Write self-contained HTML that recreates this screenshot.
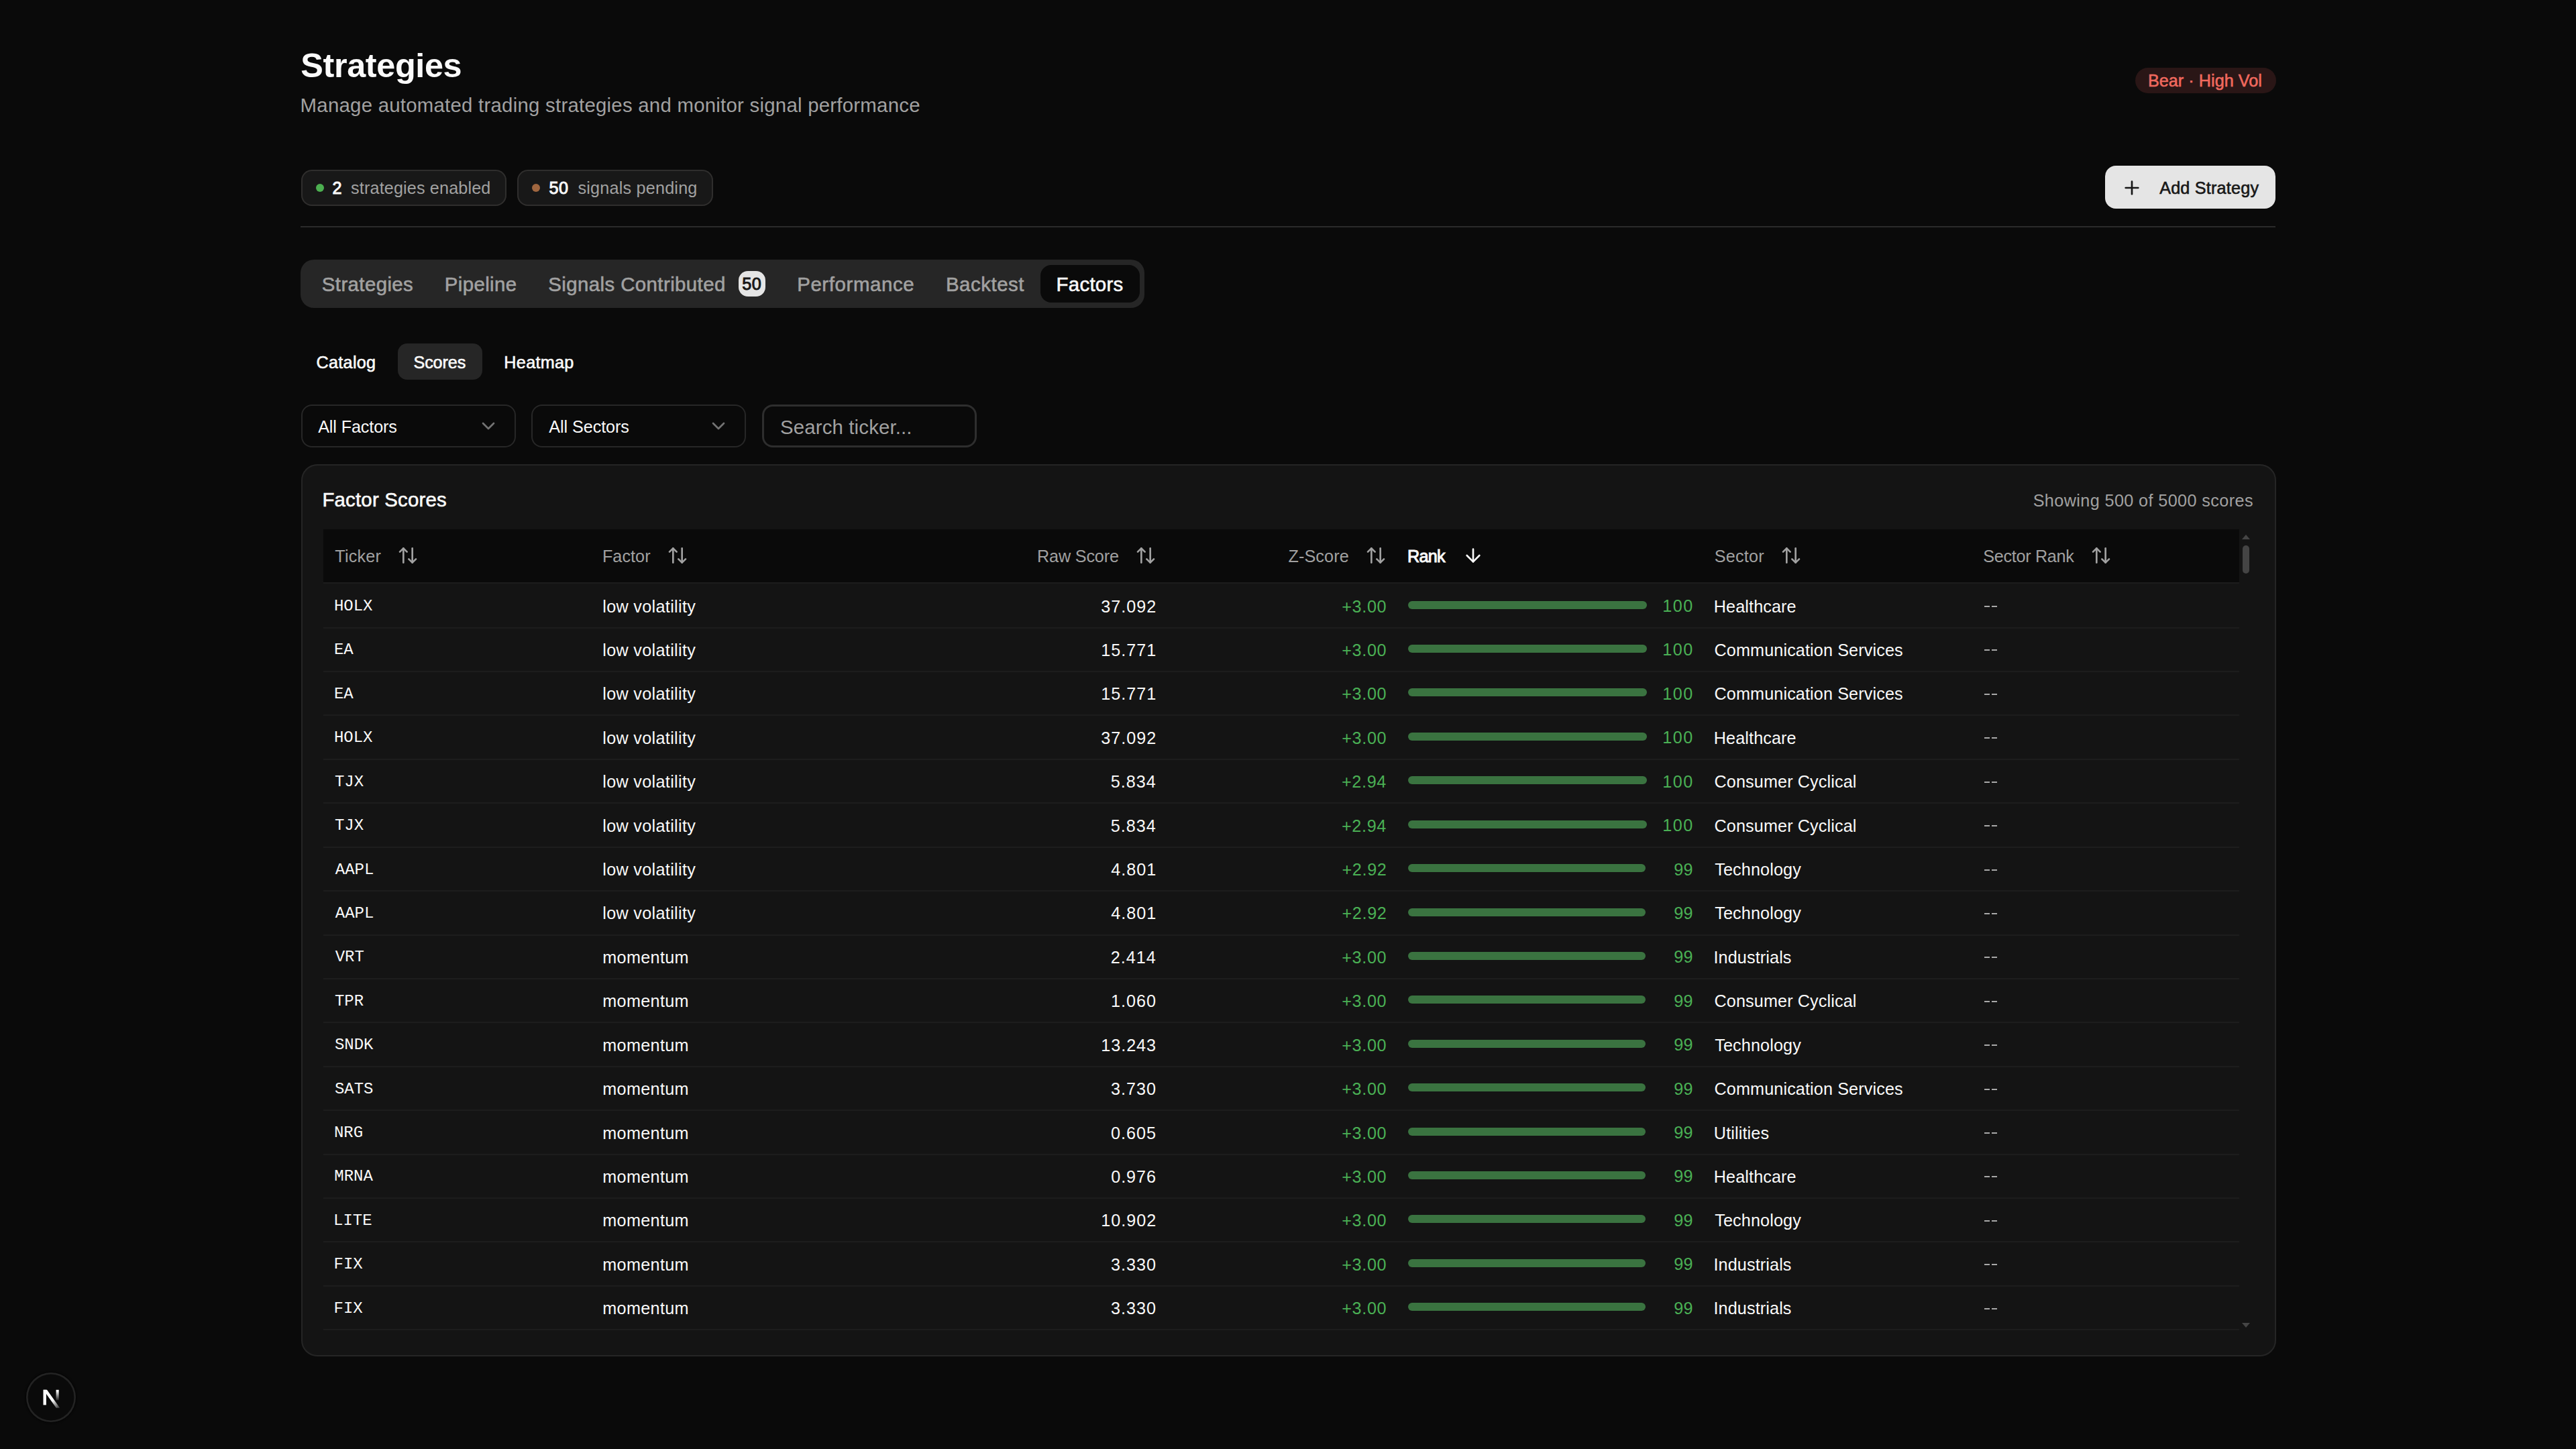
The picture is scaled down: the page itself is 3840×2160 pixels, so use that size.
<!DOCTYPE html>
<html><head><meta charset="utf-8"><title>Strategies</title><style>
*{margin:0;padding:0;box-sizing:border-box}
html,body{width:1920px;height:1080px;overflow:hidden;background:#0a0a0a}
@media (min-width:2400px){html{zoom:2}}
body{position:relative;font-family:"Liberation Sans",sans-serif;-webkit-font-smoothing:antialiased}
.t{position:absolute;white-space:nowrap}
.b{position:absolute}
</style></head>
<body>
<div class="t" style="top:35px;font-size:25.2px;line-height:28.153px;color:#fafafa;font-weight:bold;font-family:'Liberation Sans',sans-serif;letter-spacing:-0.19px;left:224.17px;">Strategies</div>
<div class="t" style="top:70px;font-size:14.7px;line-height:16.423px;color:#a1a1a1;font-weight:normal;font-family:'Liberation Sans',sans-serif;transform:translateY(0.50px);letter-spacing:0.12px;left:223.79px;">Manage automated trading strategies and monitor signal performance</div>
<div class="b" style="left:1591px;top:50px;width:105px;height:19px;background:#2a1616;border-radius:10px;transform:translate(0.5px,0.5px);"></div>
<div class="t" style="top:53px;font-size:12.6px;line-height:14.077px;color:#f0695e;font-weight:normal;font-family:'Liberation Sans',sans-serif;letter-spacing:0.02px;left:1600.97px;-webkit-text-stroke:0.3px currentColor;">Bear · High Vol</div>
<div class="b" style="left:224px;top:126px;width:153px;height:27px;background:#181818;border-radius:8px;transform:translate(0.5px,0.5px);box-shadow:inset 0 0 0 1px #2f2e2d;"></div>
<div class="b" style="left:235px;top:137px;width:6px;height:6px;background:#4caf50;border-radius:3px;transform:translate(0.5px,0.0px);"></div>
<div class="t" style="top:133px;font-size:12.6px;line-height:14.077px;color:#fafafa;font-weight:normal;font-family:'Liberation Sans',sans-serif;left:247.77px;-webkit-text-stroke:0.5px currentColor;">2</div>
<div class="t" style="top:133px;font-size:12.6px;line-height:14.077px;color:#a1a1a1;font-weight:normal;font-family:'Liberation Sans',sans-serif;letter-spacing:0.07px;left:261.55px;">strategies enabled</div>
<div class="b" style="left:385px;top:126px;width:146px;height:27px;background:#181818;border-radius:8px;transform:translate(0.5px,0.5px);box-shadow:inset 0 0 0 1px #2f2e2d;"></div>
<div class="b" style="left:396px;top:137px;width:6px;height:6px;background:#a0663f;border-radius:3px;transform:translate(0.5px,0.0px);"></div>
<div class="t" style="top:133px;font-size:12.6px;line-height:14.077px;color:#fafafa;font-weight:normal;font-family:'Liberation Sans',sans-serif;letter-spacing:0.3px;left:409.20px;-webkit-text-stroke:0.5px currentColor;">50</div>
<div class="t" style="top:133px;font-size:12.6px;line-height:14.077px;color:#a1a1a1;font-weight:normal;font-family:'Liberation Sans',sans-serif;letter-spacing:0.1px;left:430.75px;">signals pending</div>
<div class="b" style="left:1569px;top:123px;width:127px;height:32px;background:#e5e5e5;border-radius:8px;transform:translate(0.0px,0.5px);"></div>
<svg class="b" style="left:1581px;top:132px" width="16" height="16" viewBox="0 0 24 24" fill="none" stroke="#171717" stroke-width="2" stroke-linecap="round" stroke-linejoin="round"><path d="M5 12h14"/><path d="M12 5v14"/></svg>
<div class="t" style="top:133px;font-size:12.6px;line-height:14.077px;color:#171717;font-weight:normal;font-family:'Liberation Sans',sans-serif;letter-spacing:0.1px;left:1609.58px;-webkit-text-stroke:0.3px currentColor;">Add Strategy</div>
<div class="b" style="left:224px;top:168px;width:1472px;height:1px;background:#2a2a2a;border-radius:0px;transform:translate(0.0px,0.5px);"></div>
<div class="b" style="left:224px;top:193px;width:629px;height:36px;background:#262626;border-radius:10px;transform:translate(0.0px,0.5px);"></div>
<div class="b" style="left:775px;top:197px;width:74px;height:28px;background:#0a0a0a;border-radius:8px;transform:translate(0.5px,0.5px);"></div>
<div class="t" style="top:204px;font-size:14.7px;line-height:16.423px;color:#a1a1a1;font-weight:normal;font-family:'Liberation Sans',sans-serif;letter-spacing:0.2px;left:239.93px;-webkit-text-stroke:0.3px currentColor;">Strategies</div>
<div class="t" style="top:204px;font-size:14.7px;line-height:16.423px;color:#a1a1a1;font-weight:normal;font-family:'Liberation Sans',sans-serif;letter-spacing:0.2px;left:331.39px;-webkit-text-stroke:0.3px currentColor;">Pipeline</div>
<div class="t" style="top:204px;font-size:14.7px;line-height:16.423px;color:#a1a1a1;font-weight:normal;font-family:'Liberation Sans',sans-serif;letter-spacing:0.21px;left:408.63px;-webkit-text-stroke:0.3px currentColor;">Signals Contributed</div>
<div class="t" style="top:204px;font-size:14.7px;line-height:16.423px;color:#a1a1a1;font-weight:normal;font-family:'Liberation Sans',sans-serif;letter-spacing:0.31px;left:594.09px;-webkit-text-stroke:0.3px currentColor;">Performance</div>
<div class="t" style="top:204px;font-size:14.7px;line-height:16.423px;color:#a1a1a1;font-weight:normal;font-family:'Liberation Sans',sans-serif;letter-spacing:0.27px;left:704.99px;-webkit-text-stroke:0.3px currentColor;">Backtest</div>
<div class="t" style="top:204px;font-size:14.7px;line-height:16.423px;color:#fafafa;font-weight:normal;font-family:'Liberation Sans',sans-serif;letter-spacing:0.14px;left:787.29px;-webkit-text-stroke:0.3px currentColor;">Factors</div>
<div class="b" style="left:550px;top:202px;width:20px;height:19px;background:#e5e5e5;border-radius:7px;transform:translate(0.5px,0.0px);"></div>
<div class="t" style="top:204px;font-size:12.6px;line-height:14.077px;color:#171717;font-weight:normal;font-family:'Liberation Sans',sans-serif;transform:translateY(0.50px);letter-spacing:0.3px;left:553.10px;-webkit-text-stroke:0.5px currentColor;">50</div>
<div class="b" style="left:296px;top:256px;width:63px;height:27px;background:#262626;border-radius:7px;transform:translate(0.5px,0.0px);"></div>
<div class="t" style="top:263px;font-size:12.6px;line-height:14.077px;color:#fafafa;font-weight:normal;font-family:'Liberation Sans',sans-serif;letter-spacing:0.15px;left:235.76px;-webkit-text-stroke:0.3px currentColor;">Catalog</div>
<div class="t" style="top:263px;font-size:12.6px;line-height:14.077px;color:#fafafa;font-weight:normal;font-family:'Liberation Sans',sans-serif;letter-spacing:-0.06px;left:308.23px;-webkit-text-stroke:0.3px currentColor;">Scores</div>
<div class="t" style="top:263px;font-size:12.6px;line-height:14.077px;color:#fafafa;font-weight:normal;font-family:'Liberation Sans',sans-serif;letter-spacing:0.15px;left:375.67px;-webkit-text-stroke:0.3px currentColor;">Heatmap</div>
<div class="b" style="left:224px;top:301px;width:160px;height:32px;background:#0a0a0a;border-radius:8px;transform:translate(0.5px,0.5px);box-shadow:inset 0 0 0 1px #272727;"></div>
<div class="t" style="top:311px;font-size:12.6px;line-height:14.077px;color:#fafafa;font-weight:normal;font-family:'Liberation Sans',sans-serif;letter-spacing:-0.06px;left:237.08px;">All Factors</div>
<svg class="b" style="left:355.9px;top:309.4px" width="16" height="16" viewBox="0 0 24 24" fill="none" stroke="#737373" stroke-width="2" stroke-linecap="round" stroke-linejoin="round"><path d="m6 9 6 6 6-6"/></svg>
<div class="b" style="left:396px;top:301px;width:160px;height:32px;background:#0a0a0a;border-radius:8px;transform:translate(0.0px,0.5px);box-shadow:inset 0 0 0 1px #272727;"></div>
<div class="t" style="top:311px;font-size:12.6px;line-height:14.077px;color:#fafafa;font-weight:normal;font-family:'Liberation Sans',sans-serif;letter-spacing:-0.04px;left:409.18px;">All Sectors</div>
<svg class="b" style="left:527.4px;top:309.4px" width="16" height="16" viewBox="0 0 24 24" fill="none" stroke="#737373" stroke-width="2" stroke-linecap="round" stroke-linejoin="round"><path d="m6 9 6 6 6-6"/></svg>
<div class="b" style="left:568px;top:301px;width:160px;height:32px;background:#0a0a0a;border-radius:8px;transform:translate(0.0px,0.5px);box-shadow:inset 0 0 0 1.5px #2e2e2e;"></div>
<div class="t" style="top:310px;font-size:14.7px;line-height:16.423px;color:#a1a1a1;font-weight:normal;font-family:'Liberation Sans',sans-serif;transform:translateY(0.50px);letter-spacing:0.07px;left:581.53px;">Search ticker...</div>
<div class="b" style="left:224px;top:346px;width:1472px;height:665px;background:#141414;border-radius:12px;transform:translate(0.5px,0.0px);box-shadow:inset 0 0 0 1px #252525;"></div>
<div class="t" style="top:364px;font-size:14.7px;line-height:16.423px;color:#fafafa;font-weight:normal;font-family:'Liberation Sans',sans-serif;transform:translateY(0.50px);letter-spacing:0.1px;left:240.19px;-webkit-text-stroke:0.3px currentColor;">Factor Scores</div>
<div class="t" style="top:366px;font-size:12.6px;line-height:14.077px;color:#a1a1a1;font-weight:normal;font-family:'Liberation Sans',sans-serif;letter-spacing:0.2px;right:240.54px;">Showing 500 of 5000 scores</div>
<div class="b" style="left:241px;top:394px;width:1428px;height:40px;background:#0a0a0a;border-radius:0px;transform:translate(0.0px,0.5px);"></div>
<div class="b" style="left:241px;top:434px;width:1428px;height:1px;background:#1d1d1d;border-radius:0px;"></div>
<div class="t" style="top:407px;font-size:12.6px;line-height:14.077px;color:#a1a1a1;font-weight:normal;font-family:'Liberation Sans',sans-serif;transform:translateY(0.50px);letter-spacing:0.1px;left:249.62px;">Ticker</div>
<svg class="b" style="left:296.2px;top:406.1px" width="16" height="16" viewBox="0 0 24 24" fill="none" stroke="#a1a1a1" stroke-width="2" stroke-linecap="round" stroke-linejoin="round"><path d="m21 16-4 4-4-4"/><path d="M17 20V4"/><path d="m3 8 4-4 4 4"/><path d="M7 4v16"/></svg>
<div class="t" style="top:407px;font-size:12.6px;line-height:14.077px;color:#a1a1a1;font-weight:normal;font-family:'Liberation Sans',sans-serif;transform:translateY(0.50px);letter-spacing:0.02px;left:448.97px;">Factor</div>
<svg class="b" style="left:497.2px;top:406.1px" width="16" height="16" viewBox="0 0 24 24" fill="none" stroke="#a1a1a1" stroke-width="2" stroke-linecap="round" stroke-linejoin="round"><path d="m21 16-4 4-4-4"/><path d="M17 20V4"/><path d="m3 8 4-4 4 4"/><path d="M7 4v16"/></svg>
<div class="t" style="top:407px;font-size:12.6px;line-height:14.077px;color:#a1a1a1;font-weight:normal;font-family:'Liberation Sans',sans-serif;transform:translateY(0.50px);letter-spacing:-0.08px;right:1086.12px;">Raw Score</div>
<svg class="b" style="left:846.2px;top:406.1px" width="16" height="16" viewBox="0 0 24 24" fill="none" stroke="#a1a1a1" stroke-width="2" stroke-linecap="round" stroke-linejoin="round"><path d="m21 16-4 4-4-4"/><path d="M17 20V4"/><path d="m3 8 4-4 4 4"/><path d="M7 4v16"/></svg>
<div class="t" style="top:407px;font-size:12.6px;line-height:14.077px;color:#a1a1a1;font-weight:normal;font-family:'Liberation Sans',sans-serif;transform:translateY(0.50px);letter-spacing:0.06px;right:914.58px;">Z-Score</div>
<svg class="b" style="left:1017.3px;top:406.1px" width="16" height="16" viewBox="0 0 24 24" fill="none" stroke="#a1a1a1" stroke-width="2" stroke-linecap="round" stroke-linejoin="round"><path d="m21 16-4 4-4-4"/><path d="M17 20V4"/><path d="m3 8 4-4 4 4"/><path d="M7 4v16"/></svg>
<div class="t" style="top:407px;font-size:12.6px;line-height:14.077px;color:#fafafa;font-weight:normal;font-family:'Liberation Sans',sans-serif;transform:translateY(0.50px);letter-spacing:-0.35px;left:1048.97px;-webkit-text-stroke:0.5px currentColor;">Rank</div>
<svg class="b" style="left:1090px;top:406.1px" width="16" height="16" viewBox="0 0 24 24" fill="none" stroke="#fafafa" stroke-width="2" stroke-linecap="round" stroke-linejoin="round"><path d="M12 5v14"/><path d="m19 12-7 7-7-7"/></svg>
<div class="t" style="top:407px;font-size:12.6px;line-height:14.077px;color:#a1a1a1;font-weight:normal;font-family:'Liberation Sans',sans-serif;transform:translateY(0.50px);letter-spacing:0.13px;left:1277.83px;">Sector</div>
<svg class="b" style="left:1327.1px;top:406.1px" width="16" height="16" viewBox="0 0 24 24" fill="none" stroke="#a1a1a1" stroke-width="2" stroke-linecap="round" stroke-linejoin="round"><path d="m21 16-4 4-4-4"/><path d="M17 20V4"/><path d="m3 8 4-4 4 4"/><path d="M7 4v16"/></svg>
<div class="t" style="top:407px;font-size:12.6px;line-height:14.077px;color:#a1a1a1;font-weight:normal;font-family:'Liberation Sans',sans-serif;transform:translateY(0.50px);letter-spacing:-0.15px;left:1478.13px;">Sector Rank</div>
<svg class="b" style="left:1558.2px;top:406.1px" width="16" height="16" viewBox="0 0 24 24" fill="none" stroke="#a1a1a1" stroke-width="2" stroke-linecap="round" stroke-linejoin="round"><path d="m21 16-4 4-4-4"/><path d="M17 20V4"/><path d="m3 8 4-4 4 4"/><path d="M7 4v16"/></svg>
<div class="b" style="left:241px;top:467px;width:1428px;height:1px;background:#1d1d1d;border-radius:0px;transform:translate(0.0px,0.5px);"></div>
<div class="t" style="top:445px;font-size:12px;line-height:13.594px;color:#fafafa;font-weight:normal;font-family:'Liberation Mono',monospace;left:248.95px;">HOLX</div>
<div class="t" style="top:445px;font-size:12.6px;line-height:14.077px;color:#fafafa;font-weight:normal;font-family:'Liberation Sans',sans-serif;letter-spacing:0.16px;left:449.15px;">low volatility</div>
<div class="t" style="top:445px;font-size:12.6px;line-height:14.077px;color:#fafafa;font-weight:normal;font-family:'Liberation Sans',sans-serif;letter-spacing:0.49px;right:1057.88px;">37.092</div>
<div class="t" style="top:445px;font-size:12.6px;line-height:14.077px;color:#4ab054;font-weight:normal;font-family:'Liberation Sans',sans-serif;letter-spacing:0.33px;right:886.38px;">+3.00</div>
<div class="b" style="left:1049px;top:448px;width:178px;height:6px;background:#3a7340;border-radius:3px;transform:translate(0.5px,0.0px);"></div>
<div class="t" style="top:444px;font-size:12.6px;line-height:14.077px;color:#4ab054;font-weight:normal;font-family:'Liberation Sans',sans-serif;transform:translateY(0.50px);letter-spacing:0.8px;right:657.51px;">100</div>
<div class="t" style="top:445px;font-size:12.6px;line-height:14.077px;color:#fafafa;font-weight:normal;font-family:'Liberation Sans',sans-serif;letter-spacing:0.06px;left:1277.37px;">Healthcare</div>
<div class="b" style="left:1479px;top:451px;width:4px;height:1px;background:#a8a8a8;border-radius:0px;transform:translate(0.0px,0.5px);"></div>
<div class="b" style="left:1484px;top:451px;width:4px;height:1px;background:#a8a8a8;border-radius:0px;transform:translate(0.5px,0.5px);"></div>
<div class="b" style="left:241px;top:500px;width:1428px;height:1px;background:#1d1d1d;border-radius:0px;"></div>
<div class="t" style="top:477px;font-size:12px;line-height:13.594px;color:#fafafa;font-weight:normal;font-family:'Liberation Mono',monospace;transform:translateY(0.50px);left:248.95px;">EA</div>
<div class="t" style="top:477px;font-size:12.6px;line-height:14.077px;color:#fafafa;font-weight:normal;font-family:'Liberation Sans',sans-serif;transform:translateY(0.50px);letter-spacing:0.16px;left:449.15px;">low volatility</div>
<div class="t" style="top:477px;font-size:12.6px;line-height:14.077px;color:#fafafa;font-weight:normal;font-family:'Liberation Sans',sans-serif;transform:translateY(0.50px);letter-spacing:0.49px;right:1057.89px;">15.771</div>
<div class="t" style="top:477px;font-size:12.6px;line-height:14.077px;color:#4ab054;font-weight:normal;font-family:'Liberation Sans',sans-serif;transform:translateY(0.50px);letter-spacing:0.33px;right:886.38px;">+3.00</div>
<div class="b" style="left:1049px;top:480px;width:178px;height:6px;background:#3a7340;border-radius:3px;transform:translate(0.5px,0.5px);"></div>
<div class="t" style="top:477px;font-size:12.6px;line-height:14.077px;color:#4ab054;font-weight:normal;font-family:'Liberation Sans',sans-serif;letter-spacing:0.8px;right:657.51px;">100</div>
<div class="t" style="top:477px;font-size:12.6px;line-height:14.077px;color:#fafafa;font-weight:normal;font-family:'Liberation Sans',sans-serif;transform:translateY(0.50px);letter-spacing:0.06px;left:1277.76px;">Communication Services</div>
<div class="b" style="left:1479px;top:484px;width:4px;height:1px;background:#a8a8a8;border-radius:0px;"></div>
<div class="b" style="left:1484px;top:484px;width:4px;height:1px;background:#a8a8a8;border-radius:0px;transform:translate(0.5px,0.0px);"></div>
<div class="b" style="left:241px;top:532px;width:1428px;height:1px;background:#1d1d1d;border-radius:0px;transform:translate(0.0px,0.5px);"></div>
<div class="t" style="top:510px;font-size:12px;line-height:13.594px;color:#fafafa;font-weight:normal;font-family:'Liberation Mono',monospace;transform:translateY(0.50px);left:248.95px;">EA</div>
<div class="t" style="top:510px;font-size:12.6px;line-height:14.077px;color:#fafafa;font-weight:normal;font-family:'Liberation Sans',sans-serif;letter-spacing:0.16px;left:449.15px;">low volatility</div>
<div class="t" style="top:510px;font-size:12.6px;line-height:14.077px;color:#fafafa;font-weight:normal;font-family:'Liberation Sans',sans-serif;letter-spacing:0.49px;right:1057.89px;">15.771</div>
<div class="t" style="top:510px;font-size:12.6px;line-height:14.077px;color:#4ab054;font-weight:normal;font-family:'Liberation Sans',sans-serif;letter-spacing:0.33px;right:886.38px;">+3.00</div>
<div class="b" style="left:1049px;top:513px;width:178px;height:6px;background:#3a7340;border-radius:3px;transform:translate(0.5px,0.0px);"></div>
<div class="t" style="top:510px;font-size:12.6px;line-height:14.077px;color:#4ab054;font-weight:normal;font-family:'Liberation Sans',sans-serif;letter-spacing:0.8px;right:657.51px;">100</div>
<div class="t" style="top:510px;font-size:12.6px;line-height:14.077px;color:#fafafa;font-weight:normal;font-family:'Liberation Sans',sans-serif;letter-spacing:0.06px;left:1277.76px;">Communication Services</div>
<div class="b" style="left:1479px;top:517px;width:4px;height:1px;background:#a8a8a8;border-radius:0px;"></div>
<div class="b" style="left:1484px;top:517px;width:4px;height:1px;background:#a8a8a8;border-radius:0px;transform:translate(0.5px,0.0px);"></div>
<div class="b" style="left:241px;top:565px;width:1428px;height:1px;background:#1d1d1d;border-radius:0px;transform:translate(0.0px,0.5px);"></div>
<div class="t" style="top:543px;font-size:12px;line-height:13.594px;color:#fafafa;font-weight:normal;font-family:'Liberation Mono',monospace;left:248.95px;">HOLX</div>
<div class="t" style="top:543px;font-size:12.6px;line-height:14.077px;color:#fafafa;font-weight:normal;font-family:'Liberation Sans',sans-serif;letter-spacing:0.16px;left:449.15px;">low volatility</div>
<div class="t" style="top:543px;font-size:12.6px;line-height:14.077px;color:#fafafa;font-weight:normal;font-family:'Liberation Sans',sans-serif;letter-spacing:0.49px;right:1057.88px;">37.092</div>
<div class="t" style="top:543px;font-size:12.6px;line-height:14.077px;color:#4ab054;font-weight:normal;font-family:'Liberation Sans',sans-serif;letter-spacing:0.33px;right:886.38px;">+3.00</div>
<div class="b" style="left:1049px;top:546px;width:178px;height:6px;background:#3a7340;border-radius:3px;transform:translate(0.5px,0.0px);"></div>
<div class="t" style="top:542px;font-size:12.6px;line-height:14.077px;color:#4ab054;font-weight:normal;font-family:'Liberation Sans',sans-serif;transform:translateY(0.50px);letter-spacing:0.8px;right:657.51px;">100</div>
<div class="t" style="top:543px;font-size:12.6px;line-height:14.077px;color:#fafafa;font-weight:normal;font-family:'Liberation Sans',sans-serif;letter-spacing:0.06px;left:1277.37px;">Healthcare</div>
<div class="b" style="left:1479px;top:549px;width:4px;height:1px;background:#a8a8a8;border-radius:0px;transform:translate(0.0px,0.5px);"></div>
<div class="b" style="left:1484px;top:549px;width:4px;height:1px;background:#a8a8a8;border-radius:0px;transform:translate(0.5px,0.5px);"></div>
<div class="b" style="left:241px;top:598px;width:1428px;height:1px;background:#1d1d1d;border-radius:0px;"></div>
<div class="t" style="top:576px;font-size:12px;line-height:13.594px;color:#fafafa;font-weight:normal;font-family:'Liberation Mono',monospace;left:249.45px;">TJX</div>
<div class="t" style="top:575px;font-size:12.6px;line-height:14.077px;color:#fafafa;font-weight:normal;font-family:'Liberation Sans',sans-serif;transform:translateY(0.50px);letter-spacing:0.16px;left:449.15px;">low volatility</div>
<div class="t" style="top:575px;font-size:12.6px;line-height:14.077px;color:#fafafa;font-weight:normal;font-family:'Liberation Sans',sans-serif;transform:translateY(0.50px);letter-spacing:0.49px;right:1058.14px;">5.834</div>
<div class="t" style="top:575px;font-size:12.6px;line-height:14.077px;color:#4ab054;font-weight:normal;font-family:'Liberation Sans',sans-serif;transform:translateY(0.50px);letter-spacing:0.33px;right:886.50px;">+2.94</div>
<div class="b" style="left:1049px;top:578px;width:178px;height:6px;background:#3a7340;border-radius:3px;transform:translate(0.5px,0.5px);"></div>
<div class="t" style="top:575px;font-size:12.6px;line-height:14.077px;color:#4ab054;font-weight:normal;font-family:'Liberation Sans',sans-serif;transform:translateY(0.50px);letter-spacing:0.8px;right:657.51px;">100</div>
<div class="t" style="top:575px;font-size:12.6px;line-height:14.077px;color:#fafafa;font-weight:normal;font-family:'Liberation Sans',sans-serif;transform:translateY(0.50px);letter-spacing:0.06px;left:1277.76px;">Consumer Cyclical</div>
<div class="b" style="left:1479px;top:582px;width:4px;height:1px;background:#a8a8a8;border-radius:0px;transform:translate(0.0px,0.5px);"></div>
<div class="b" style="left:1484px;top:582px;width:4px;height:1px;background:#a8a8a8;border-radius:0px;transform:translate(0.5px,0.5px);"></div>
<div class="b" style="left:241px;top:631px;width:1428px;height:1px;background:#1d1d1d;border-radius:0px;"></div>
<div class="t" style="top:608px;font-size:12px;line-height:13.594px;color:#fafafa;font-weight:normal;font-family:'Liberation Mono',monospace;transform:translateY(0.50px);left:249.45px;">TJX</div>
<div class="t" style="top:608px;font-size:12.6px;line-height:14.077px;color:#fafafa;font-weight:normal;font-family:'Liberation Sans',sans-serif;transform:translateY(0.50px);letter-spacing:0.16px;left:449.15px;">low volatility</div>
<div class="t" style="top:608px;font-size:12.6px;line-height:14.077px;color:#fafafa;font-weight:normal;font-family:'Liberation Sans',sans-serif;transform:translateY(0.50px);letter-spacing:0.49px;right:1058.14px;">5.834</div>
<div class="t" style="top:608px;font-size:12.6px;line-height:14.077px;color:#4ab054;font-weight:normal;font-family:'Liberation Sans',sans-serif;transform:translateY(0.50px);letter-spacing:0.33px;right:886.50px;">+2.94</div>
<div class="b" style="left:1049px;top:611px;width:178px;height:6px;background:#3a7340;border-radius:3px;transform:translate(0.5px,0.5px);"></div>
<div class="t" style="top:608px;font-size:12.6px;line-height:14.077px;color:#4ab054;font-weight:normal;font-family:'Liberation Sans',sans-serif;letter-spacing:0.8px;right:657.51px;">100</div>
<div class="t" style="top:608px;font-size:12.6px;line-height:14.077px;color:#fafafa;font-weight:normal;font-family:'Liberation Sans',sans-serif;transform:translateY(0.50px);letter-spacing:0.06px;left:1277.76px;">Consumer Cyclical</div>
<div class="b" style="left:1479px;top:615px;width:4px;height:1px;background:#a8a8a8;border-radius:0px;"></div>
<div class="b" style="left:1484px;top:615px;width:4px;height:1px;background:#a8a8a8;border-radius:0px;transform:translate(0.5px,0.0px);"></div>
<div class="b" style="left:241px;top:663px;width:1428px;height:1px;background:#1d1d1d;border-radius:0px;transform:translate(0.0px,0.5px);"></div>
<div class="t" style="top:641px;font-size:12px;line-height:13.594px;color:#fafafa;font-weight:normal;font-family:'Liberation Mono',monospace;transform:translateY(0.50px);left:249.90px;">AAPL</div>
<div class="t" style="top:641px;font-size:12.6px;line-height:14.077px;color:#fafafa;font-weight:normal;font-family:'Liberation Sans',sans-serif;letter-spacing:0.16px;left:449.15px;">low volatility</div>
<div class="t" style="top:641px;font-size:12.6px;line-height:14.077px;color:#fafafa;font-weight:normal;font-family:'Liberation Sans',sans-serif;letter-spacing:0.49px;right:1057.89px;">4.801</div>
<div class="t" style="top:641px;font-size:12.6px;line-height:14.077px;color:#4ab054;font-weight:normal;font-family:'Liberation Sans',sans-serif;letter-spacing:0.33px;right:886.24px;">+2.92</div>
<div class="b" style="left:1049px;top:644px;width:177px;height:6px;background:#3a7340;border-radius:3px;transform:translate(0.5px,0.0px);"></div>
<div class="t" style="top:641px;font-size:12.6px;line-height:14.077px;color:#4ab054;font-weight:normal;font-family:'Liberation Sans',sans-serif;letter-spacing:0.2px;right:658.00px;">99</div>
<div class="t" style="top:641px;font-size:12.6px;line-height:14.077px;color:#fafafa;font-weight:normal;font-family:'Liberation Sans',sans-serif;letter-spacing:0.06px;left:1278.12px;">Technology</div>
<div class="b" style="left:1479px;top:648px;width:4px;height:1px;background:#a8a8a8;border-radius:0px;"></div>
<div class="b" style="left:1484px;top:648px;width:4px;height:1px;background:#a8a8a8;border-radius:0px;transform:translate(0.5px,0.0px);"></div>
<div class="b" style="left:241px;top:696px;width:1428px;height:1px;background:#1d1d1d;border-radius:0px;transform:translate(0.0px,0.5px);"></div>
<div class="t" style="top:674px;font-size:12px;line-height:13.594px;color:#fafafa;font-weight:normal;font-family:'Liberation Mono',monospace;left:249.90px;">AAPL</div>
<div class="t" style="top:673px;font-size:12.6px;line-height:14.077px;color:#fafafa;font-weight:normal;font-family:'Liberation Sans',sans-serif;transform:translateY(0.50px);letter-spacing:0.16px;left:449.15px;">low volatility</div>
<div class="t" style="top:673px;font-size:12.6px;line-height:14.077px;color:#fafafa;font-weight:normal;font-family:'Liberation Sans',sans-serif;transform:translateY(0.50px);letter-spacing:0.49px;right:1057.89px;">4.801</div>
<div class="t" style="top:673px;font-size:12.6px;line-height:14.077px;color:#4ab054;font-weight:normal;font-family:'Liberation Sans',sans-serif;transform:translateY(0.50px);letter-spacing:0.33px;right:886.24px;">+2.92</div>
<div class="b" style="left:1049px;top:677px;width:177px;height:6px;background:#3a7340;border-radius:3px;transform:translate(0.5px,0.0px);"></div>
<div class="t" style="top:673px;font-size:12.6px;line-height:14.077px;color:#4ab054;font-weight:normal;font-family:'Liberation Sans',sans-serif;transform:translateY(0.50px);letter-spacing:0.2px;right:658.00px;">99</div>
<div class="t" style="top:673px;font-size:12.6px;line-height:14.077px;color:#fafafa;font-weight:normal;font-family:'Liberation Sans',sans-serif;transform:translateY(0.50px);letter-spacing:0.06px;left:1278.12px;">Technology</div>
<div class="b" style="left:1479px;top:680px;width:4px;height:1px;background:#a8a8a8;border-radius:0px;transform:translate(0.0px,0.5px);"></div>
<div class="b" style="left:1484px;top:680px;width:4px;height:1px;background:#a8a8a8;border-radius:0px;transform:translate(0.5px,0.5px);"></div>
<div class="b" style="left:241px;top:729px;width:1428px;height:1px;background:#1d1d1d;border-radius:0px;"></div>
<div class="t" style="top:706px;font-size:12px;line-height:13.594px;color:#fafafa;font-weight:normal;font-family:'Liberation Mono',monospace;transform:translateY(0.50px);left:249.84px;">VRT</div>
<div class="t" style="top:706px;font-size:12.6px;line-height:14.077px;color:#fafafa;font-weight:normal;font-family:'Liberation Sans',sans-serif;transform:translateY(0.50px);letter-spacing:0.16px;left:449.16px;">momentum</div>
<div class="t" style="top:706px;font-size:12.6px;line-height:14.077px;color:#fafafa;font-weight:normal;font-family:'Liberation Sans',sans-serif;transform:translateY(0.50px);letter-spacing:0.49px;right:1058.14px;">2.414</div>
<div class="t" style="top:706px;font-size:12.6px;line-height:14.077px;color:#4ab054;font-weight:normal;font-family:'Liberation Sans',sans-serif;transform:translateY(0.50px);letter-spacing:0.33px;right:886.38px;">+3.00</div>
<div class="b" style="left:1049px;top:709px;width:177px;height:6px;background:#3a7340;border-radius:3px;transform:translate(0.5px,0.5px);"></div>
<div class="t" style="top:706px;font-size:12.6px;line-height:14.077px;color:#4ab054;font-weight:normal;font-family:'Liberation Sans',sans-serif;letter-spacing:0.2px;right:658.00px;">99</div>
<div class="t" style="top:706px;font-size:12.6px;line-height:14.077px;color:#fafafa;font-weight:normal;font-family:'Liberation Sans',sans-serif;transform:translateY(0.50px);letter-spacing:0.06px;left:1277.24px;">Industrials</div>
<div class="b" style="left:1479px;top:713px;width:4px;height:1px;background:#a8a8a8;border-radius:0px;"></div>
<div class="b" style="left:1484px;top:713px;width:4px;height:1px;background:#a8a8a8;border-radius:0px;transform:translate(0.5px,0.0px);"></div>
<div class="b" style="left:241px;top:761px;width:1428px;height:1px;background:#1d1d1d;border-radius:0px;transform:translate(0.0px,0.5px);"></div>
<div class="t" style="top:739px;font-size:12px;line-height:13.594px;color:#fafafa;font-weight:normal;font-family:'Liberation Mono',monospace;transform:translateY(0.50px);left:249.45px;">TPR</div>
<div class="t" style="top:739px;font-size:12.6px;line-height:14.077px;color:#fafafa;font-weight:normal;font-family:'Liberation Sans',sans-serif;letter-spacing:0.16px;left:449.16px;">momentum</div>
<div class="t" style="top:739px;font-size:12.6px;line-height:14.077px;color:#fafafa;font-weight:normal;font-family:'Liberation Sans',sans-serif;letter-spacing:0.49px;right:1058.02px;">1.060</div>
<div class="t" style="top:739px;font-size:12.6px;line-height:14.077px;color:#4ab054;font-weight:normal;font-family:'Liberation Sans',sans-serif;letter-spacing:0.33px;right:886.38px;">+3.00</div>
<div class="b" style="left:1049px;top:742px;width:177px;height:6px;background:#3a7340;border-radius:3px;transform:translate(0.5px,0.0px);"></div>
<div class="t" style="top:739px;font-size:12.6px;line-height:14.077px;color:#4ab054;font-weight:normal;font-family:'Liberation Sans',sans-serif;letter-spacing:0.2px;right:658.00px;">99</div>
<div class="t" style="top:739px;font-size:12.6px;line-height:14.077px;color:#fafafa;font-weight:normal;font-family:'Liberation Sans',sans-serif;letter-spacing:0.06px;left:1277.76px;">Consumer Cyclical</div>
<div class="b" style="left:1479px;top:746px;width:4px;height:1px;background:#a8a8a8;border-radius:0px;"></div>
<div class="b" style="left:1484px;top:746px;width:4px;height:1px;background:#a8a8a8;border-radius:0px;transform:translate(0.5px,0.0px);"></div>
<div class="b" style="left:241px;top:794px;width:1428px;height:1px;background:#1d1d1d;border-radius:0px;transform:translate(0.0px,0.5px);"></div>
<div class="t" style="top:772px;font-size:12px;line-height:13.594px;color:#fafafa;font-weight:normal;font-family:'Liberation Mono',monospace;left:249.44px;">SNDK</div>
<div class="t" style="top:772px;font-size:12.6px;line-height:14.077px;color:#fafafa;font-weight:normal;font-family:'Liberation Sans',sans-serif;letter-spacing:0.16px;left:449.16px;">momentum</div>
<div class="t" style="top:772px;font-size:12.6px;line-height:14.077px;color:#fafafa;font-weight:normal;font-family:'Liberation Sans',sans-serif;letter-spacing:0.49px;right:1057.96px;">13.243</div>
<div class="t" style="top:772px;font-size:12.6px;line-height:14.077px;color:#4ab054;font-weight:normal;font-family:'Liberation Sans',sans-serif;letter-spacing:0.33px;right:886.38px;">+3.00</div>
<div class="b" style="left:1049px;top:775px;width:177px;height:6px;background:#3a7340;border-radius:3px;transform:translate(0.5px,0.0px);"></div>
<div class="t" style="top:771px;font-size:12.6px;line-height:14.077px;color:#4ab054;font-weight:normal;font-family:'Liberation Sans',sans-serif;transform:translateY(0.50px);letter-spacing:0.2px;right:658.00px;">99</div>
<div class="t" style="top:772px;font-size:12.6px;line-height:14.077px;color:#fafafa;font-weight:normal;font-family:'Liberation Sans',sans-serif;letter-spacing:0.06px;left:1278.12px;">Technology</div>
<div class="b" style="left:1479px;top:778px;width:4px;height:1px;background:#a8a8a8;border-radius:0px;transform:translate(0.0px,0.5px);"></div>
<div class="b" style="left:1484px;top:778px;width:4px;height:1px;background:#a8a8a8;border-radius:0px;transform:translate(0.5px,0.5px);"></div>
<div class="b" style="left:241px;top:827px;width:1428px;height:1px;background:#1d1d1d;border-radius:0px;"></div>
<div class="t" style="top:805px;font-size:12px;line-height:13.594px;color:#fafafa;font-weight:normal;font-family:'Liberation Mono',monospace;left:249.44px;">SATS</div>
<div class="t" style="top:804px;font-size:12.6px;line-height:14.077px;color:#fafafa;font-weight:normal;font-family:'Liberation Sans',sans-serif;transform:translateY(0.50px);letter-spacing:0.16px;left:449.16px;">momentum</div>
<div class="t" style="top:804px;font-size:12.6px;line-height:14.077px;color:#fafafa;font-weight:normal;font-family:'Liberation Sans',sans-serif;transform:translateY(0.50px);letter-spacing:0.49px;right:1058.02px;">3.730</div>
<div class="t" style="top:804px;font-size:12.6px;line-height:14.077px;color:#4ab054;font-weight:normal;font-family:'Liberation Sans',sans-serif;transform:translateY(0.50px);letter-spacing:0.33px;right:886.38px;">+3.00</div>
<div class="b" style="left:1049px;top:807px;width:177px;height:6px;background:#3a7340;border-radius:3px;transform:translate(0.5px,0.5px);"></div>
<div class="t" style="top:804px;font-size:12.6px;line-height:14.077px;color:#4ab054;font-weight:normal;font-family:'Liberation Sans',sans-serif;transform:translateY(0.50px);letter-spacing:0.2px;right:658.00px;">99</div>
<div class="t" style="top:804px;font-size:12.6px;line-height:14.077px;color:#fafafa;font-weight:normal;font-family:'Liberation Sans',sans-serif;transform:translateY(0.50px);letter-spacing:0.06px;left:1277.76px;">Communication Services</div>
<div class="b" style="left:1479px;top:811px;width:4px;height:1px;background:#a8a8a8;border-radius:0px;transform:translate(0.0px,0.5px);"></div>
<div class="b" style="left:1484px;top:811px;width:4px;height:1px;background:#a8a8a8;border-radius:0px;transform:translate(0.5px,0.5px);"></div>
<div class="b" style="left:241px;top:860px;width:1428px;height:1px;background:#1d1d1d;border-radius:0px;"></div>
<div class="t" style="top:837px;font-size:12px;line-height:13.594px;color:#fafafa;font-weight:normal;font-family:'Liberation Mono',monospace;transform:translateY(0.50px);left:248.95px;">NRG</div>
<div class="t" style="top:837px;font-size:12.6px;line-height:14.077px;color:#fafafa;font-weight:normal;font-family:'Liberation Sans',sans-serif;transform:translateY(0.50px);letter-spacing:0.16px;left:449.16px;">momentum</div>
<div class="t" style="top:837px;font-size:12.6px;line-height:14.077px;color:#fafafa;font-weight:normal;font-family:'Liberation Sans',sans-serif;transform:translateY(0.50px);letter-spacing:0.49px;right:1057.98px;">0.605</div>
<div class="t" style="top:837px;font-size:12.6px;line-height:14.077px;color:#4ab054;font-weight:normal;font-family:'Liberation Sans',sans-serif;transform:translateY(0.50px);letter-spacing:0.33px;right:886.38px;">+3.00</div>
<div class="b" style="left:1049px;top:840px;width:177px;height:6px;background:#3a7340;border-radius:3px;transform:translate(0.5px,0.5px);"></div>
<div class="t" style="top:837px;font-size:12.6px;line-height:14.077px;color:#4ab054;font-weight:normal;font-family:'Liberation Sans',sans-serif;letter-spacing:0.2px;right:658.00px;">99</div>
<div class="t" style="top:837px;font-size:12.6px;line-height:14.077px;color:#fafafa;font-weight:normal;font-family:'Liberation Sans',sans-serif;transform:translateY(0.50px);letter-spacing:0.06px;left:1277.43px;">Utilities</div>
<div class="b" style="left:1479px;top:844px;width:4px;height:1px;background:#a8a8a8;border-radius:0px;"></div>
<div class="b" style="left:1484px;top:844px;width:4px;height:1px;background:#a8a8a8;border-radius:0px;transform:translate(0.5px,0.0px);"></div>
<div class="b" style="left:241px;top:892px;width:1428px;height:1px;background:#1d1d1d;border-radius:0px;transform:translate(0.0px,0.5px);"></div>
<div class="t" style="top:870px;font-size:12px;line-height:13.594px;color:#fafafa;font-weight:normal;font-family:'Liberation Mono',monospace;left:249.14px;">MRNA</div>
<div class="t" style="top:870px;font-size:12.6px;line-height:14.077px;color:#fafafa;font-weight:normal;font-family:'Liberation Sans',sans-serif;letter-spacing:0.16px;left:449.16px;">momentum</div>
<div class="t" style="top:870px;font-size:12.6px;line-height:14.077px;color:#fafafa;font-weight:normal;font-family:'Liberation Sans',sans-serif;letter-spacing:0.49px;right:1057.96px;">0.976</div>
<div class="t" style="top:870px;font-size:12.6px;line-height:14.077px;color:#4ab054;font-weight:normal;font-family:'Liberation Sans',sans-serif;letter-spacing:0.33px;right:886.38px;">+3.00</div>
<div class="b" style="left:1049px;top:873px;width:177px;height:6px;background:#3a7340;border-radius:3px;transform:translate(0.5px,0.0px);"></div>
<div class="t" style="top:869px;font-size:12.6px;line-height:14.077px;color:#4ab054;font-weight:normal;font-family:'Liberation Sans',sans-serif;transform:translateY(0.50px);letter-spacing:0.2px;right:658.00px;">99</div>
<div class="t" style="top:870px;font-size:12.6px;line-height:14.077px;color:#fafafa;font-weight:normal;font-family:'Liberation Sans',sans-serif;letter-spacing:0.06px;left:1277.37px;">Healthcare</div>
<div class="b" style="left:1479px;top:876px;width:4px;height:1px;background:#a8a8a8;border-radius:0px;transform:translate(0.0px,0.5px);"></div>
<div class="b" style="left:1484px;top:876px;width:4px;height:1px;background:#a8a8a8;border-radius:0px;transform:translate(0.5px,0.5px);"></div>
<div class="b" style="left:241px;top:925px;width:1428px;height:1px;background:#1d1d1d;border-radius:0px;"></div>
<div class="t" style="top:903px;font-size:12px;line-height:13.594px;color:#fafafa;font-weight:normal;font-family:'Liberation Mono',monospace;left:248.51px;">LITE</div>
<div class="t" style="top:902px;font-size:12.6px;line-height:14.077px;color:#fafafa;font-weight:normal;font-family:'Liberation Sans',sans-serif;transform:translateY(0.50px);letter-spacing:0.16px;left:449.16px;">momentum</div>
<div class="t" style="top:902px;font-size:12.6px;line-height:14.077px;color:#fafafa;font-weight:normal;font-family:'Liberation Sans',sans-serif;transform:translateY(0.50px);letter-spacing:0.49px;right:1057.88px;">10.902</div>
<div class="t" style="top:902px;font-size:12.6px;line-height:14.077px;color:#4ab054;font-weight:normal;font-family:'Liberation Sans',sans-serif;transform:translateY(0.50px);letter-spacing:0.33px;right:886.38px;">+3.00</div>
<div class="b" style="left:1049px;top:905px;width:177px;height:6px;background:#3a7340;border-radius:3px;transform:translate(0.5px,0.5px);"></div>
<div class="t" style="top:902px;font-size:12.6px;line-height:14.077px;color:#4ab054;font-weight:normal;font-family:'Liberation Sans',sans-serif;transform:translateY(0.50px);letter-spacing:0.2px;right:658.00px;">99</div>
<div class="t" style="top:902px;font-size:12.6px;line-height:14.077px;color:#fafafa;font-weight:normal;font-family:'Liberation Sans',sans-serif;transform:translateY(0.50px);letter-spacing:0.06px;left:1278.12px;">Technology</div>
<div class="b" style="left:1479px;top:909px;width:4px;height:1px;background:#a8a8a8;border-radius:0px;transform:translate(0.0px,0.5px);"></div>
<div class="b" style="left:1484px;top:909px;width:4px;height:1px;background:#a8a8a8;border-radius:0px;transform:translate(0.5px,0.5px);"></div>
<div class="b" style="left:241px;top:958px;width:1428px;height:1px;background:#1d1d1d;border-radius:0px;"></div>
<div class="t" style="top:935px;font-size:12px;line-height:13.594px;color:#fafafa;font-weight:normal;font-family:'Liberation Mono',monospace;transform:translateY(0.50px);left:248.76px;">FIX</div>
<div class="t" style="top:935px;font-size:12.6px;line-height:14.077px;color:#fafafa;font-weight:normal;font-family:'Liberation Sans',sans-serif;transform:translateY(0.50px);letter-spacing:0.16px;left:449.16px;">momentum</div>
<div class="t" style="top:935px;font-size:12.6px;line-height:14.077px;color:#fafafa;font-weight:normal;font-family:'Liberation Sans',sans-serif;transform:translateY(0.50px);letter-spacing:0.49px;right:1058.02px;">3.330</div>
<div class="t" style="top:935px;font-size:12.6px;line-height:14.077px;color:#4ab054;font-weight:normal;font-family:'Liberation Sans',sans-serif;transform:translateY(0.50px);letter-spacing:0.33px;right:886.38px;">+3.00</div>
<div class="b" style="left:1049px;top:938px;width:177px;height:6px;background:#3a7340;border-radius:3px;transform:translate(0.5px,0.5px);"></div>
<div class="t" style="top:935px;font-size:12.6px;line-height:14.077px;color:#4ab054;font-weight:normal;font-family:'Liberation Sans',sans-serif;letter-spacing:0.2px;right:658.00px;">99</div>
<div class="t" style="top:935px;font-size:12.6px;line-height:14.077px;color:#fafafa;font-weight:normal;font-family:'Liberation Sans',sans-serif;transform:translateY(0.50px);letter-spacing:0.06px;left:1277.24px;">Industrials</div>
<div class="b" style="left:1479px;top:942px;width:4px;height:1px;background:#a8a8a8;border-radius:0px;"></div>
<div class="b" style="left:1484px;top:942px;width:4px;height:1px;background:#a8a8a8;border-radius:0px;transform:translate(0.5px,0.0px);"></div>
<div class="b" style="left:241px;top:990px;width:1428px;height:1px;background:#1d1d1d;border-radius:0px;transform:translate(0.0px,0.5px);"></div>
<div class="t" style="top:968px;font-size:12px;line-height:13.594px;color:#fafafa;font-weight:normal;font-family:'Liberation Mono',monospace;transform:translateY(0.50px);left:248.76px;">FIX</div>
<div class="t" style="top:968px;font-size:12.6px;line-height:14.077px;color:#fafafa;font-weight:normal;font-family:'Liberation Sans',sans-serif;letter-spacing:0.16px;left:449.16px;">momentum</div>
<div class="t" style="top:968px;font-size:12.6px;line-height:14.077px;color:#fafafa;font-weight:normal;font-family:'Liberation Sans',sans-serif;letter-spacing:0.49px;right:1058.02px;">3.330</div>
<div class="t" style="top:968px;font-size:12.6px;line-height:14.077px;color:#4ab054;font-weight:normal;font-family:'Liberation Sans',sans-serif;letter-spacing:0.33px;right:886.38px;">+3.00</div>
<div class="b" style="left:1049px;top:971px;width:177px;height:6px;background:#3a7340;border-radius:3px;transform:translate(0.5px,0.0px);"></div>
<div class="t" style="top:968px;font-size:12.6px;line-height:14.077px;color:#4ab054;font-weight:normal;font-family:'Liberation Sans',sans-serif;letter-spacing:0.2px;right:658.00px;">99</div>
<div class="t" style="top:968px;font-size:12.6px;line-height:14.077px;color:#fafafa;font-weight:normal;font-family:'Liberation Sans',sans-serif;letter-spacing:0.06px;left:1277.24px;">Industrials</div>
<div class="b" style="left:1479px;top:975px;width:4px;height:1px;background:#a8a8a8;border-radius:0px;"></div>
<div class="b" style="left:1484px;top:975px;width:4px;height:1px;background:#a8a8a8;border-radius:0px;transform:translate(0.5px,0.0px);"></div>
<div class="b" style="left:1671px;top:398.3px;width:0;height:0;border-left:3.4px solid transparent;border-right:3.4px solid transparent;border-bottom:3.8px solid #454545"></div>
<div class="b" style="left:1671px;top:406px;width:5px;height:21px;background:#444444;border-radius:3px;transform:translate(0.5px,0.5px);"></div>
<div class="b" style="left:1671px;top:986px;width:0;height:0;border-left:3.4px solid transparent;border-right:3.4px solid transparent;border-top:3.8px solid #454545"></div>
<div class="b" style="left:19.7px;top:1023px;width:37px;height:37px;border-radius:50%;background:#0a0a0a;box-shadow:inset 0 0 0 1.3px #232323, 0 0 1.5px 0.5px rgba(0,0,0,0.7)"></div>
<svg class="b" style="left:30px;top:1033px" width="16" height="18" viewBox="30 1033 16 18"><defs><linearGradient id="g1" gradientUnits="userSpaceOnUse" x1="33" y1="1036" x2="44.5" y2="1049.5"><stop offset="0.55" stop-color="#fff"/><stop offset="1" stop-color="#fff" stop-opacity="0.15"/></linearGradient><linearGradient id="g2" gradientUnits="userSpaceOnUse" x1="0" y1="1035.9" x2="0" y2="1043.6"><stop offset="0.1" stop-color="#fff"/><stop offset="1" stop-color="#fff" stop-opacity="0.1"/></linearGradient></defs><rect x="32.25" y="1035.9" width="2.2" height="11.3" fill="#fff"/><polygon points="32.3,1035.9 35.0,1035.9 44.6,1049.4 41.9,1049.4" fill="url(#g1)"/><rect x="41.8" y="1035.9" width="2.05" height="7.7" fill="url(#g2)"/></svg>
</body></html>
